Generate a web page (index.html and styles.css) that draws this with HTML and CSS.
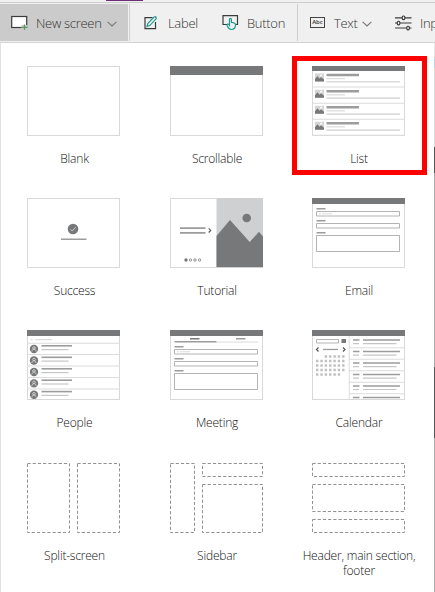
FILE: index.html
```
<!DOCTYPE html>
<html lang="en">
<head>
<meta charset="utf-8">
<title>New screen</title>
<link rel="stylesheet" href="styles.css">
</head>
<body>
<svg class="defs" width="0" height="0">
  <defs>
    <g id="list-row">
      <rect class="soft" x="3" y="2.5" width="9" height="8"/>
      <path class="dark" d="M3 10.5V8l2.5-3 2 2.5L9 6l3 2.500v2z"/>
      <circle cx="9" cy="4.500" r="1" fill="#fff"/>
      <path class="mid" d="M14.500 2.700H47v2.600H14.500z"/>
      <path class="pale" d="M14.500 7H33v1.200H14.500zM14.500 10H88v1.600H14.500zM0 15.500h93v1H0z"/>
    </g>
    <g id="person-row">
      <circle class="dark" cx="7" cy="5.800" r="4.200"/>
      <circle class="wire" cx="7" cy="4.800" r="1.300"/>
      <path class="wire" d="M4.800 8.300c.4-3 4-3 4.400 0"/>
      <path class="mid" d="M14.500 1.800H45v1.600H14.500z"/>
      <path class="light" d="M14.500 5.800h27V7h-27z"/>
      <path class="pale" d="M0 10.800h93v1H0z"/>
    </g>
    <g id="fields">
      <path class="mid" d="M4.500 0h9v1.600h-9zM4.500 12h9v1.600h-9zM4.500 24h9v1.600h-9z"/>
      <path class="box" d="M4.500 3.500h83v4.500h-83zM4.500 15.500h83V20h-83zM4.500 27.500h83V43.500h-83z"/>
      <path class="pale" d="M7 5.300h2v1H7zM10 5.300h10v1H10z"/>
    </g>
    <g id="event">
      <path class="mid" d="M41 3h6.500v1.500H41zM51 3h37v1.500H51z"/>
      <path class="light" d="M41 6.700h6v1.200h-6zM51 6.700h33.500v1.200H51z"/>
      <path class="pale" d="M37 11h56v1H37z"/>
    </g>
  </defs>
</svg>

<div class="app">
  <div class="tabs"><span class="tab-mark"></span></div>
  <nav class="toolbar">
    <button class="tool new-screen">
      <svg width="18" height="16" viewBox="0 0 18 16"><rect x=".7" y="1.500" width="15" height="11" fill="#fff" stroke="#3b3b3b" stroke-width="1.200"/><path d="M10.500 10h6v6h-6z" fill="#cbcbcb"/><path d="M13.500 9.500v5.500M10.800 12.300h5.500" stroke="#5a9b62" stroke-width="1.300"/></svg>
      <span>New screen</span>
      <svg class="caret" width="10" height="6" viewBox="0 0 10 6"><path d="m.6.8 4.400 4.200L9.400.8"/></svg>
    </button>
    <button class="tool label-tool">
      <svg width="14" height="16" viewBox="0 0 14 16"><path d="M8.500 2.600H1v11h10.500V7" fill="none" stroke="#3b3b3b" stroke-width="1.200"/><path d="m3 11.500.8-3L10 2l1.700-.3.600 1.900L6 10.300z" fill="#f0f0f0" stroke="#219b91" stroke-width="1.200"/></svg>
      <span>Label</span>
    </button>
    <button class="tool button-tool">
      <svg width="17" height="17" viewBox="0 0 17 17"><path d="M5 10.500H1V1.600h14.500v8.900H14" fill="none" stroke="#3b3b3b" stroke-width="1.200"/><path d="M7.500 10V5.300c0-1.300 1.900-1.300 1.900 0v3c2 .2 4.100.5 4.100 2.300 0 2.500-1 4.900-4 4.900-2.600 0-3.600-1.800-4.400-4.200-.4-1.300 1.200-1.800 2.400 0z" fill="#f0f0f0" stroke="#219b91" stroke-width="1.200"/></svg>
      <span>Button</span>
    </button>
    <button class="tool text-tool">
      <span class="abc">Abc</span>
      <span>Text</span>
      <svg class="caret" width="10" height="6" viewBox="0 0 10 6"><path d="m.6.8 4.400 4.200L9.400.8"/></svg>
    </button>
    <button class="tool input-tool">
      <svg width="17" height="16" viewBox="0 0 17 16"><g fill="none" stroke="#3b3b3b" stroke-width="1.150"><path d="M0 2.800h7M10 2.800h6.500M0 8h2M5 8h11.500M0 13h11.500M14.500 13h2"/><rect x="7.300" y="1" width="2.500" height="3.600" rx="1"/><rect x="2.300" y="6.200" width="2.500" height="3.600" rx="1"/><rect x="11.800" y="11.200" width="2.500" height="3.600" rx="1"/></g></svg>
      <span>Inp</span>
    </button>
  </nav>
  <div class="body">
    <main class="menu">
      <figure><svg class="thumb" viewBox="0 0 93 70"><rect class="frame" x=".5" y=".5" width="92" height="69"/></svg><figcaption>Blank</figcaption></figure>
      <figure><svg class="thumb" viewBox="0 0 93 70"><rect class="frame" x=".5" y=".5" width="92" height="69"/><path class="dark" d="M0 0h93v9H0z"/></svg><figcaption>Scrollable</figcaption></figure>
      <figure class="selected"><svg class="thumb" viewBox="0 0 93 70"><rect class="frame" x=".5" y=".5" width="92" height="69"/><path class="dark" d="M0 0h93v5H0z"/><use href="#list-row" y="5"/><use href="#list-row" y="21.300"/><use href="#list-row" y="37.300"/><use href="#list-row" y="53.300"/></svg><figcaption>List</figcaption></figure>

      <figure><svg class="thumb" viewBox="0 0 93 70"><rect class="frame" x=".5" y=".5" width="92" height="69"/><circle class="dark" cx="46" cy="31" r="5.300"/><path class="wire" d="m43.500 31.300 1.700 1.700 3.500-3.800"/><path class="mid" d="M34 40.500h25.500V42H34z"/></svg><figcaption>Success</figcaption></figure>
      <figure><svg class="thumb" viewBox="0 0 93 70"><rect class="frame" x=".5" y=".5" width="92" height="69"/><path fill="#cfd0d1" d="M46.500 0H93v70H46.500z"/><path class="dark" d="M46.500 38 60 22l19.700 22L89 33.700l4 4.800V69H46.500z"/><circle class="dark" cx="76.700" cy="20" r="4.300"/><path class="mid" d="M10 29.200h25.500v1.800H10zM10 34h25.500v1.800H10z"/><path d="m38.700 30.300 2 2.100-2 2.100" fill="none" stroke="#555" stroke-width="1.100"/><circle class="dark" cx="16" cy="62" r="1.700"/><g fill="none" stroke="#888" stroke-width=".9"><circle cx="20.500" cy="62" r="1.200"/><circle cx="25" cy="62" r="1.200"/><circle cx="29.500" cy="62" r="1.200"/></g></svg><figcaption>Tutorial</figcaption></figure>
      <figure><svg class="thumb" viewBox="0 0 93 70"><rect class="frame" x=".5" y=".5" width="92" height="69"/><path class="dark" d="M0 0h93v6H0z"/><use href="#fields" y="10"/></svg><figcaption>Email</figcaption></figure>

      <figure><svg class="thumb" viewBox="0 0 93 70"><rect class="frame" x=".5" y=".5" width="92" height="69"/><path class="dark" d="M0 0h93v6H0z"/><path class="pale" d="M3.500 9h2v1h-2zM8.500 9H25v1.200H8.500zM0 12.700h93v1H0z"/><use href="#person-row" y="13.200"/><use href="#person-row" y="24.700"/><use href="#person-row" y="36.200"/><use href="#person-row" y="47.600"/><use href="#person-row" y="59"/></svg><figcaption>People</figcaption></figure>
      <figure><svg class="thumb" viewBox="0 0 93 70"><rect class="frame" x=".5" y=".5" width="92" height="69"/><path class="dark" d="M0 0h93v6H0zM20 8h9.500v1.500H20z"/><path class="mid" d="M66 8h9.500v1.400H66zM4.500 11h42v1.500h-42z"/><path class="pale" d="M46.500 11.500H88v1H46.500z"/><use href="#fields" y="16"/></svg><figcaption>Meeting</figcaption></figure>
      <figure><svg class="thumb" viewBox="0 0 93 70"><rect class="frame" x=".5" y=".5" width="92" height="69"/><path class="dark" d="M0 0h93v6H0zM29.500 9H34v4h-4.500z"/><path class="box" d="M4.500 9.500h22v3.500h-22z"/><path d="m6.500 17.500-2 2 2 2M31 17.500l2 2-2 2" fill="none" stroke="#555" stroke-width="1.200"/><path class="mid" d="M11 18.800h15v1.300H11z"/><path class="days" d="M12.700 26.500h21M4 31h29.700M4 35.500h29.700M4 40h29.700M4 44.500h24.300"/><path class="pale" d="M36.700 6h1v64h-1z"/><use href="#event" y="6.300"/><use href="#event" y="17.800"/><use href="#event" y="29.300"/><use href="#event" y="40.800"/><use href="#event" y="52.200"/><path class="mid" d="M41 66.700h6.500v1.500H41zM51 66.700h37v1.500H51z"/></svg><figcaption>Calendar</figcaption></figure>

      <figure><svg class="thumb" viewBox="0 0 93 70"><path class="dash" d="M.5.500h42v69H.5zM50.500.500h42v69h-42z"/></svg><figcaption>Split-screen</figcaption></figure>
      <figure><svg class="thumb" viewBox="0 0 93 70"><path class="dash" d="M.5.500h24v69H.5zM32.500.500h60v13h-60zM32.500 21.500h60v48h-60z"/></svg><figcaption>Sidebar</figcaption></figure>
      <figure><svg class="thumb" viewBox="0 0 93 70"><path class="dash" d="M.5.500h92v13H.5zM.5 21.500h92v27H.5zM.5 56.500h92v13H.5z"/></svg><figcaption>Header, main section, footer</figcaption></figure>
    </main>
    <aside class="canvas-edge"></aside>
  </div>
</div>
</body>
</html>
```

FILE: styles.css
```
*, *::after { box-sizing: border-box; }
body { margin: 0; background: #fff; font-family: "Open Sans", "Noto Sans", sans-serif; overflow: hidden; }
.defs { display: block; position: absolute; }
.app { width: 435px; height: 592px; display: flex; flex-direction: column; overflow: hidden; }

.tabs { height: 3px; flex: none; background: #f0f0f0; border-bottom: 1px solid #cecece; }
.tab-mark { display: block; width: 37px; height: 1px; margin-left: 106px; background: #6b2f73; }

.toolbar { height: 40px; flex: none; display: flex; background: #f0f0f0; border-bottom: 1px solid #d2d2d2; padding-top: 1px; }
.tool { flex: none; display: flex; align-items: center; height: 37px; border: 0; padding: 0; background: none; font: 300 13px/18px "Open Sans", "Noto Sans", sans-serif; color: #333; letter-spacing: -.3px; white-space: nowrap; }
.tool svg { flex: none; display: block; }
.tool .caret { fill: none; stroke: #777; stroke-width: 1.1; margin-top: 2px; }
.new-screen { width: 128px; padding-left: 11px; gap: 7px; background: #cbcbcb; }
.new-screen span { width: 64px; }
.label-tool { width: 93px; margin-left: 1px; padding-left: 14px; gap: 10px; border-left: 1px solid #d2d2d2; }
.button-tool { width: 75px; gap: 8px; }
.text-tool { width: 97px; padding-left: 12px; gap: 9px; border-left: 1px solid #cecece; }
.text-tool .caret { margin-left: -5px; }
.tool .abc { width: 15px; height: 11px; border: 1px solid #444; font-size: 6px; line-height: 9px; font-weight: 600; letter-spacing: 0; text-align: center; }
.input-tool { gap: 8px; margin-left: 1px; }

.body { flex: 1; display: flex; min-height: 0; }
.menu { width: 434px; flex: none; border-left: 1px solid #e2e2e2; display: grid; grid-template-columns: 143px 142px 142px; grid-template-rows: 132px 132px 133px 126px; padding: 23px 0 0 1px; }
.canvas-edge { flex: 1; background: linear-gradient(#e6e6e6 0 14px, #bcd2e5 14px 25px, #ddd 25px 104px, #555 104px 130px, #aaa 130px 324px, #555 324px 395px, #aaa 395px); }
figure { margin: 0; display: flex; flex-direction: column; align-items: center; position: relative; }
figure:nth-child(3n+1) .thumb { margin-right: 1px; }
.selected::after { content: ""; position: absolute; left: 5px; top: -10px; width: 135px; height: 119px; border: 5px solid #f00; }
figcaption { margin: 15px 0 0 2px; width: 124px; text-align: center; font-size: 12px; line-height: 15px; font-weight: 300; color: #111; letter-spacing: -.2px; }

.thumb { display: block; width: 93px; height: 70px; }
.frame { fill: #fff; stroke: #d9d9d9; }
.dark { fill: #77787a; }
.mid { fill: #9c9c9c; }
.light { fill: #c6c6c6; }
.pale { fill: #dcdcdc; }
.soft { fill: #d5d5d5; }
.wire { fill: none; stroke: #d5d5d5; stroke-width: .9; }
.box { fill: #fff; stroke: #b3b3b3; }
.days { fill: none; stroke: #c0c0c0; stroke-width: 2.3; stroke-dasharray: 2.4 1.95; }
.dash { fill: none; stroke: #929292; stroke-dasharray: 3.2 2; }
```
